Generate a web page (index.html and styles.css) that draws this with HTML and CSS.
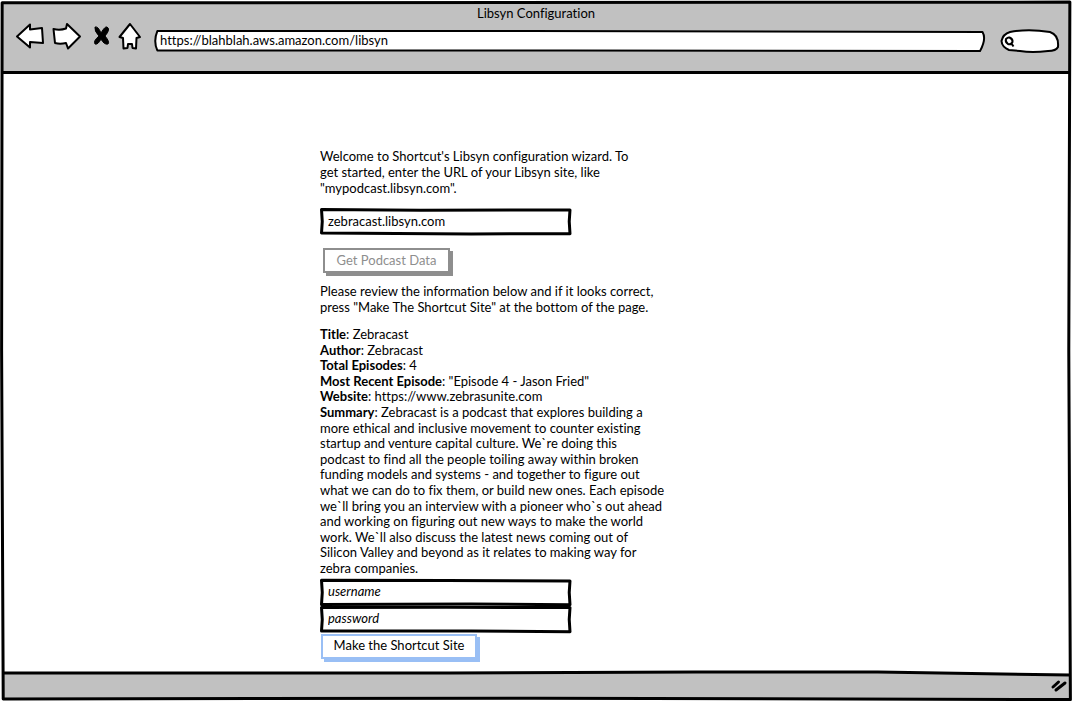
FILE: index.html
```html
<!DOCTYPE html>
<html lang="en">
<head>
<meta charset="utf-8">
<title>Libsyn Configuration</title>
<link rel="stylesheet" href="styles.css">
</head>
<body>
<div class="window">
  <header class="chrome">
    <h1 class="title">Libsyn Configuration</h1>
    <div class="toolbar">
      <nav class="nav">
        <button type="button" class="tool" aria-label="Back">
          <svg width="30" height="28" viewBox="0 0 30 28"><path d="M2 14.500L15 2.500V7.500L27 6L28 21L15 20V25.500Z"/></svg>
        </button>
        <button type="button" class="tool" aria-label="Forward">
          <svg width="30" height="28" viewBox="0 0 30 28"><path d="M1.500 7Q8 8.500 14 6.500L15 2L28 14.500L16 26.500L14 21Q8 22.500 3 21Z"/></svg>
        </button>
        <button type="button" class="tool tool-stop" aria-label="Stop">
          <svg width="18" height="22" viewBox="0 0 18 22"><path d="M2 2Q5 1 8 8Q12 1 14 2Q18 4 12 11Q17 17 15 19Q11 20 8 14Q5 20 2 19Q0 16 6 11Q1 6 2 2Z"/></svg>
        </button>
        <button type="button" class="tool" aria-label="Home">
          <svg width="24" height="28" viewBox="0 0 24 28"><path d="M12 2L22 15L18.500 16L18 26.500L14.500 26L14 22H10L9.500 26L5.500 26.500L5 16L1.500 15Z"/></svg>
        </button>
      </nav>
      <div class="address">
        <svg class="outline" viewBox="0 0 100 100" preserveAspectRatio="none" aria-hidden="true"><path d="M.4 5L45 5L99.700 9Q100.200 40 99.400 96L50 93L.4 93Q-.1 50 .4 5Z"/></svg>
        <input class="field address-field" type="text" aria-label="Address" value="https://blahblah.aws.amazon.com/libsyn">
      </div>
      <div class="search">
        <svg class="search-art" width="60" height="26" viewBox="0 0 60 26" aria-hidden="true"><path d="M10 4Q28 .500 50 4Q59 7 58 19Q56 23 48 23Q32 25 20 23L9 22Q2 19 1.500 13Q3 6 10 4Z"/><path class="lens" d="M9.500 9.500Q13 11 12.500 14Q11 17 8 16Q5 14 6 11Q8 9 9.500 9.500ZM11.500 15.500L13.500 18.500"/></svg>
        <input class="field search-field" type="search" aria-label="Search">
      </div>
    </div>
  </header>

  <main class="page">
    <form class="wizard">
      <p class="copy">Welcome to Shortcut's Libsyn configuration wizard. To<br>get started, enter the URL of your Libsyn site, like<br>"mypodcast.libsyn.com".</p>
      <div class="box box-site">
        <svg class="outline" viewBox="0 0 100 100" preserveAspectRatio="none" aria-hidden="true"><path d="M.6 6L40 8L99.200 7L98.900 50L99.200 95L60 96L.6 93L.9 50Z"/></svg>
        <input class="field" type="text" aria-label="Libsyn site URL" value="zebracast.libsyn.com">
      </div>
      <button type="button" class="action action-muted" disabled>Get Podcast Data</button>
      <p class="copy">Please review the information below and if it looks correct,<br>press "Make The Shortcut Site" at the bottom of the page.</p>
      <div class="details">
        <div><b>Title</b>: Zebracast</div>
        <div><b>Author</b>: Zebracast</div>
        <div><b>Total Episodes</b>: 4</div>
        <div><b>Most Recent Episode</b>: "Episode 4 - Jason Fried"</div>
        <div><b>Website</b>: https://www.zebrasunite.com</div>
        <div><b>Summary</b>: Zebracast is a podcast that explores building a<br>more ethical and inclusive movement to counter existing<br>startup and venture capital culture. We`re doing this<br>podcast to find all the people toiling away within broken<br>funding models and systems - and together to figure out<br>what we can do to fix them, or build new ones. Each episode<br>we`ll bring you an interview with a pioneer who`s out ahead<br>and working on figuring out new ways to make the world<br>work. We`ll also discuss the latest news coming out of<br>Silicon Valley and beyond as it relates to making way for<br>zebra companies.</div>
      </div>
      <div class="box">
        <svg class="outline" viewBox="0 0 100 100" preserveAspectRatio="none" aria-hidden="true"><path d="M.6 5L50 6L99.200 7L98.900 50L99.200 95L60 93L.6 94L.9 50Z"/></svg>
        <input class="field" type="text" aria-label="Username" placeholder="username">
      </div>
      <div class="box">
        <svg class="outline" viewBox="0 0 100 100" preserveAspectRatio="none" aria-hidden="true"><path d="M.6 6L50 5L99.200 6L98.900 50L99.200 95L60 93L.6 93L.9 50Z"/></svg>
        <input class="field" type="text" aria-label="Password" placeholder="password">
      </div>
      <button type="submit" class="action action-primary">Make the Shortcut Site</button>
    </form>
  </main>

  <footer class="status">
    <svg class="status-art" viewBox="0 0 1000 28" preserveAspectRatio="none" aria-hidden="true"><path d="M0 2L420 2L650 1L820 1L1000 4V28H0Z"/><path class="status-line" d="M0 2L420 2L650 1L820 1L1000 4"/></svg>
    <svg class="grip" width="18" height="16" viewBox="0 0 18 16" aria-hidden="true"><path d="M3 10L8.500 5M6 13L15 6"/></svg>
  </footer>

  <svg class="frame" viewBox="0 0 1000 1000" preserveAspectRatio="none" aria-hidden="true"><path d="M2 4L998 3L997 500L998.500 998L500 996L3 997L1.500 500Z"/></svg>
</div>
</body>
</html>
```
FILE: styles.css
```css
* {
  box-sizing: border-box;
}

body {
  margin: 0;
  background: #fff;
  color: #000;
  font: 13px/1.2 Lato, "Noto Sans", sans-serif;
  font-variant-ligatures: none;
}

button,
input {
  font: inherit;
  font-variant-ligatures: none;
  color: inherit;
}

svg {
  display: block;
}

.window {
  position: relative;
  display: flex;
  flex-direction: column;
  min-height: 100vh;
  padding: 2px;
}

.frame {
  position: absolute;
  inset: 0;
  width: 100%;
  height: 100%;
  pointer-events: none;
}

.frame path,
.outline path {
  fill: none;
  stroke: #000;
  stroke-width: 3px;
  stroke-linejoin: round;
  vector-effect: non-scaling-stroke;
}

.chrome {
  height: 72px;
  background: #c1c1c1;
  border-bottom: 3px solid #000;
}

.title {
  margin: 0;
  padding-top: 3px;
  font-size: 13px;
  font-weight: 400;
  line-height: 16px;
  text-align: center;
}

.toolbar {
  display: flex;
  align-items: flex-start;
  padding: 1px 10px 0 13px;
}

.nav {
  display: flex;
  align-items: center;
  gap: 7px;
  margin-right: 12px;
}

.tool {
  padding: 0;
  border: 0;
  background: none;
}

.tool path {
  fill: #fff;
  stroke: #000;
  stroke-width: 2px;
  stroke-linejoin: round;
}

.tool-stop {
  margin: 0 0 0 4px;
}

.tool-stop path {
  fill: #000;
  stroke-width: 1px;
}

.address {
  position: relative;
  flex: 1;
  height: 22px;
  margin: 8px 15px 0 0;
}

.outline {
  position: absolute;
  inset: 0;
  width: 100%;
  height: 100%;
  overflow: visible;
}

.address .outline path {
  fill: #fff;
  stroke-width: 2px;
}

.box .outline path {
  fill: #fff;
}

.field {
  position: relative;
  width: 100%;
  height: 100%;
  padding: 0 8px 2px;
  border: 0;
  outline: 0;
  background: transparent;
}

.address-field {
  padding: 0 6px 2px;
}

.field::placeholder {
  color: #000;
  opacity: 1;
  font-style: italic;
}

.search {
  position: relative;
  width: 60px;
  height: 26px;
  margin-top: 6px;
}

.search-art {
  position: absolute;
  inset: 0;
}

.search-art path {
  fill: #fff;
  stroke: #000;
  stroke-width: 2px;
}

.search-art .lens {
  fill: none;
}

.search-field {
  padding: 0 8px 0 16px;
}

.page {
  flex: 1;
  padding: 74px 16px 12px;
}

.wizard {
  display: flex;
  flex-direction: column;
  align-items: flex-start;
  width: 100%;
  max-width: 432px;
  margin: 0 auto;
}

.copy {
  margin: 0;
  line-height: 16px;
}

.box {
  position: relative;
  width: 252px;
  height: 27px;
}

.box-site {
  margin: 12px 0 13px;
}

.action {
  height: 25px;
  padding: 0 8px;
  border: 2px solid;
  background: #fff;
}

.action-muted {
  width: 127px;
  margin: 0 0 10px 3px;
  border-color: #8e8e8e;
  box-shadow: 3px 3px #8e8e8e;
  color: #8e8e8e;
}

.action-primary {
  width: 156px;
  margin: 1px 0 0 1px;
  border-color: #99bff5;
  box-shadow: 3px 3px #99bff5;
}

.details {
  margin: 12px 0 2px;
}

.status {
  position: relative;
  display: flex;
  align-items: center;
  justify-content: flex-end;
  height: 28px;
}

.status-art {
  position: absolute;
  inset: 0;
  width: 100%;
  height: 100%;
  overflow: visible;
}

.status-art path {
  fill: #c1c1c1;
}

.status-art .status-line {
  fill: none;
  stroke: #000;
  stroke-width: 3px;
  vector-effect: non-scaling-stroke;
}

.grip {
  position: relative;
  margin-right: 2px;
}

.grip path {
  fill: none;
  stroke: #000;
  stroke-width: 3px;
  stroke-linecap: round;
}
```
